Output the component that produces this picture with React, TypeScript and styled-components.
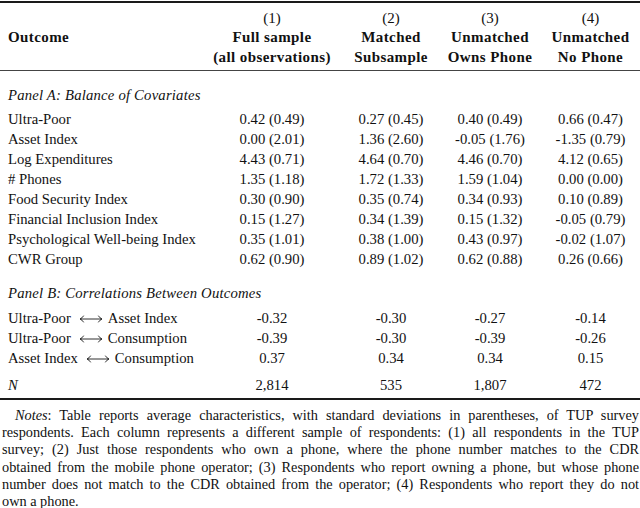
import React from "react";
import styled, { createGlobalStyle } from "styled-components";

const GlobalStyle = createGlobalStyle`
  html, body { margin: 0; padding: 0; background: #ffffff; }
  body {
    font-family: "Liberation Serif", "DejaVu Serif", serif;
    color: #111111;
  }
`;

const COLS = "201px 142px 96px 102px 99px";

const Page = styled.div`
  width: 640px;
  font-size: 14.7px;
`;

const Rule = styled.div<{ $thick?: boolean; $gap?: number }>`
  height: ${(p) => (p.$thick ? 2 : 1)}px;
  background: ${(p) => (p.$thick ? "#1a1a1a" : "#444444")};
  margin-top: ${(p) => p.$gap ?? 0}px;
`;

const Header = styled.div`
  display: grid;
  grid-template-columns: ${COLS};
  grid-template-rows: repeat(3, 19.5px);
  padding-top: 5.25px;
  font-weight: bold;
  font-size: 15px;
  letter-spacing: 0.4px;
`;

const HeadLabel = styled.div`
  grid-row: 2;
  grid-column: 1;
  padding-left: 8px;
  display: flex;
  align-items: center;
`;

const HeadCell = styled.div<{ $col: number; $line: number; $plain?: boolean }>`
  grid-column: ${(p) => p.$col};
  grid-row: ${(p) => p.$line};
  display: flex;
  justify-content: center;
  align-items: center;
  white-space: nowrap;
  font-weight: ${(p) => (p.$plain ? "normal" : "bold")};
  letter-spacing: ${(p) => (p.$plain ? 0 : 0.4)}px;
`;

const Row = styled.div<{ $gap?: number }>`
  display: grid;
  grid-template-columns: ${COLS};
  height: 20px;
  align-items: center;
  margin-top: ${(p) => p.$gap ?? 0}px;
`;

const Label = styled.div`
  padding-left: 8px;
  white-space: nowrap;
  display: flex;
  align-items: center;
`;

const Value = styled.div`
  display: flex;
  justify-content: center;
  white-space: nowrap;
`;

const PanelTitle = styled.div<{ $gap: number }>`
  height: 20px;
  line-height: 20px;
  padding-left: 8px;
  font-style: italic;
  letter-spacing: 0.2px;
  margin-top: ${(p) => p.$gap}px;
`;

const ArrowSvg = styled.svg`
  width: 24px;
  height: 8px;
  margin: 1px 5px 0 8px;
  flex: none;
`;

const LongArrow = () => (
  <ArrowSvg viewBox="0 0 24 8">
    <path
      d="M1.5 4 H22.5 M4.5 1 Q3.2 3.2 1 4 Q3.2 4.8 4.5 7 M19.5 1 Q20.8 3.2 23 4 Q20.8 4.8 19.5 7"
      fill="none"
      stroke="#1a1a1a"
      strokeWidth="0.9"
      strokeLinecap="round"
    />
  </ArrowSvg>
);

const Math = styled.span`
  font-style: italic;
`;

const Notes = styled.div`
  margin-top: 6.5px;
  padding: 0 1px 0 2px;
  font-size: 14.3px;
  line-height: 17.4px;
`;

const NoteLine = styled.div<{ $last?: boolean; $indent?: boolean }>`
  text-align: ${(p) => (p.$last ? "left" : "justify")};
  text-align-last: ${(p) => (p.$last ? "left" : "justify")};
  text-indent: ${(p) => (p.$indent ? 13 : 0)}px;
  line-height: ${(p) => (p.$last ? "14px" : "inherit")};
  white-space: nowrap;
`;

const headers = [
  ["(1)", "Full sample", "(all observations)"],
  ["(2)", "Matched", "Subsample"],
  ["(3)", "Unmatched", "Owns Phone"],
  ["(4)", "Unmatched", "No Phone"],
];

const panelA: [string, string[]][] = [
  ["Ultra-Poor", ["0.42 (0.49)", "0.27 (0.45)", "0.40 (0.49)", "0.66 (0.47)"]],
  ["Asset Index", ["0.00 (2.01)", "1.36 (2.60)", "-0.05 (1.76)", "-1.35 (0.79)"]],
  ["Log Expenditures", ["4.43 (0.71)", "4.64 (0.70)", "4.46 (0.70)", "4.12 (0.65)"]],
  ["# Phones", ["1.35 (1.18)", "1.72 (1.33)", "1.59 (1.04)", "0.00 (0.00)"]],
  ["Food Security Index", ["0.30 (0.90)", "0.35 (0.74)", "0.34 (0.93)", "0.10 (0.89)"]],
  ["Financial Inclusion Index", ["0.15 (1.27)", "0.34 (1.39)", "0.15 (1.32)", "-0.05 (0.79)"]],
  ["Psychological Well-being Index", ["0.35 (1.01)", "0.38 (1.00)", "0.43 (0.97)", "-0.02 (1.07)"]],
  ["CWR Group", ["0.62 (0.90)", "0.89 (1.02)", "0.62 (0.88)", "0.26 (0.66)"]],
];

const panelB: [string, string, string[]][] = [
  ["Ultra-Poor", "Asset Index", ["-0.32", "-0.30", "-0.27", "-0.14"]],
  ["Ultra-Poor", "Consumption", ["-0.39", "-0.30", "-0.39", "-0.26"]],
  ["Asset Index", "Consumption", ["0.37", "0.34", "0.34", "0.15"]],
];

const noteLines = [
  "Table reports average characteristics, with standard deviations in parentheses, of TUP survey",
  "respondents. Each column represents a different sample of respondents: (1) all respondents in the TUP",
  "survey; (2) Just those respondents who own a phone, where the phone number matches to the CDR",
  "obtained from the mobile phone operator; (3) Respondents who report owning a phone, but whose phone",
  "number does not match to the CDR obtained from the operator; (4) Respondents who report they do not",
  "own a phone.",
];

export default function App() {
  return (
    <Page>
      <GlobalStyle />
      <Rule $thick $gap={1} />
      <Header>
        <HeadLabel>Outcome</HeadLabel>
        {headers.map((lines, c) =>
          lines.map((t, l) => (
            <HeadCell key={`${c}-${l}`} $col={c + 2} $line={l + 1} $plain={l === 0}>
              {t}
            </HeadCell>
          ))
        )}
      </Header>
      <Rule $gap={3.25} />

      <PanelTitle $gap={14}>Panel A: Balance of Covariates</PanelTitle>
      {panelA.map(([label, vals], i) => (
        <Row key={label} $gap={i === 0 ? 4 : 0}>
          <Label>{label}</Label>
          {vals.map((v, j) => (
            <Value key={j}>{v}</Value>
          ))}
        </Row>
      ))}

      <PanelTitle $gap={14}>Panel B: Correlations Between Outcomes</PanelTitle>
      {panelB.map(([a, b, vals], i) => (
        <Row key={a + b} $gap={i === 0 ? 5 : 0}>
          <Label>
            {a}
            <LongArrow />
            {b}
          </Label>
          {vals.map((v, j) => (
            <Value key={j}>{v}</Value>
          ))}
        </Row>
      ))}

      <Row $gap={7}>
        <Label>
          <Math>N</Math>
        </Label>
        <Value>2,814</Value>
        <Value>535</Value>
        <Value>1,807</Value>
        <Value>472</Value>
      </Row>
      <Rule $thick $gap={3} />

      <Notes>
        {noteLines.map((t, i) => (
          <NoteLine key={i} $indent={i === 0} $last={i === noteLines.length - 1}>
            {i === 0 && (
              <>
                <Math>Notes</Math>:{" "}
              </>
            )}
            {t}
          </NoteLine>
        ))}
      </Notes>
    </Page>
  );
}
